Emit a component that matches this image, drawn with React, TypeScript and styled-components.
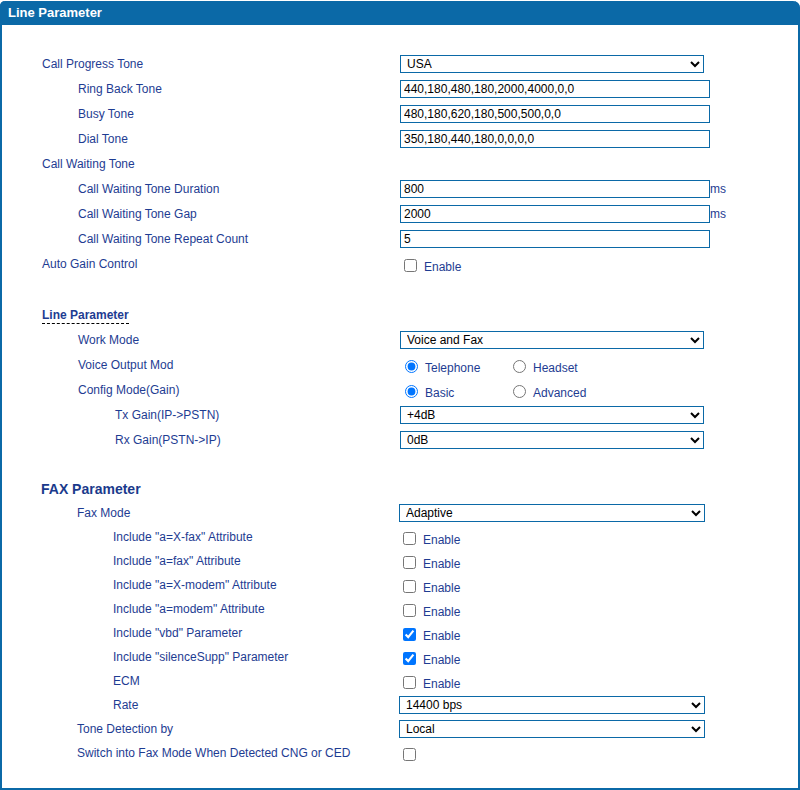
import React from 'react';
import styled, { createGlobalStyle } from 'styled-components';

const GlobalStyle = createGlobalStyle`
  html, body {
    margin: 0;
    padding: 0;
    background: #ffffff;
    font-family: "Liberation Sans", Arial, sans-serif;
  }
`;

const blue = '#0b69a7';
const navy = '#1e3c92';

const Panel = styled.div`
  margin-top: 1px;
  width: 800px;
  box-sizing: border-box;
  border: 2px solid ${blue};
  border-top: none;
  border-radius: 5px 7px 0 0;
  background: #fff;
`;

const Header = styled.div`
  height: 24px;
  margin: 0 -2px;
  padding-left: 8px;
  background: ${blue};
  border-radius: 5px 7px 0 0;
  color: #fff;
  font-size: 13px;
  font-weight: bold;
  line-height: 23px;
`;

const Body = styled.div`
  padding: 26px 0 23px;
`;

const Section = styled.div<{ $col: number; $rowH: number }>`
  --col: ${p => p.$col}px;
  --row: ${p => p.$rowH}px;
`;

const Row = styled.div`
  display: grid;
  grid-template-columns: var(--col) 1fr;
  align-items: center;
  height: var(--row);
`;

const Spacer = styled.div<{ $h: number }>`
  height: ${p => p.$h}px;
`;

const Label = styled.div<{ $indent: number }>`
  padding-left: ${p => p.$indent}px;
  font-size: 12px;
  color: ${navy};
  white-space: nowrap;
`;

const SubTitle = styled.span`
  font-size: 12px;
  font-weight: bold;
  color: ${navy};
  border-bottom: 1px dashed #000;
  padding-bottom: 1px;
`;

const FaxTitle = styled.div<{ $indent: number }>`
  padding-left: ${p => p.$indent}px;
  font-size: 14px;
  font-weight: bold;
  color: #1a3a8c;
`;

const Control = styled.div`
  display: flex;
  align-items: center;
`;

const TextInput = styled.input`
  width: 310px;
  height: 18px;
  box-sizing: border-box;
  border: 1px solid ${blue};
  padding: 0 3px;
  font-family: "Liberation Sans", Arial, sans-serif;
  font-size: 12px;
  color: #000;
  outline: none;
`;

const Select = styled.select<{ $w: number }>`
  width: ${p => p.$w}px;
  height: 18px;
  box-sizing: border-box;
  border: 1px solid ${blue};
  border-radius: 0;
  padding: 0 0 0 2px;
  font-family: "Liberation Sans", Arial, sans-serif;
  font-size: 12px;
  color: #000;
  background: #fff;
`;

const Unit = styled.span`
  font-size: 12px;
  color: ${navy};
`;

const Check = styled.input`
  width: 13px;
  height: 13px;
  margin: 3px 3px 0 4px;
`;

const OptionText = styled.span`
  margin-left: 4px;
  margin-top: 6px;
  font-size: 12px;
  color: ${navy};
`;

const RadioOption = styled.label`
  display: flex;
  align-items: center;
  width: 108px;
`;

const Radio = styled.input`
  width: 13px;
  height: 13px;
  margin: 4px 3px 0 5px;
`;

type Item =
  | { kind: 'select'; value: string; w?: number }
  | { kind: 'text'; value: string; unit?: string }
  | { kind: 'check'; checked?: boolean; noText?: boolean }
  | { kind: 'radio'; name: string; options: string[] };

function Field({ item }: { item: Item }) {
  switch (item.kind) {
    case 'select':
      return (
        <Select $w={item.w ?? 304} defaultValue={item.value}>
          <option>{item.value}</option>
        </Select>
      );
    case 'text':
      return (
        <>
          <TextInput defaultValue={item.value} />
          {item.unit && <Unit>{item.unit}</Unit>}
        </>
      );
    case 'check':
      return (
        <>
          <Check type="checkbox" defaultChecked={item.checked} />
          {!item.noText && <OptionText>Enable</OptionText>}
        </>
      );
    case 'radio':
      return (
        <>
          {item.options.map((o, i) => (
            <RadioOption key={o}>
              <Radio type="radio" name={item.name} defaultChecked={i === 0} />
              <OptionText>{o}</OptionText>
            </RadioOption>
          ))}
        </>
      );
  }
}

type RowDef = { label: string; level: number; item?: Item };

const toneRows: RowDef[] = [
  { label: 'Call Progress Tone', level: 0, item: { kind: 'select', value: 'USA' } },
  { label: 'Ring Back Tone', level: 1, item: { kind: 'text', value: '440,180,480,180,2000,4000,0,0' } },
  { label: 'Busy Tone', level: 1, item: { kind: 'text', value: '480,180,620,180,500,500,0,0' } },
  { label: 'Dial Tone', level: 1, item: { kind: 'text', value: '350,180,440,180,0,0,0,0' } },
  { label: 'Call Waiting Tone', level: 0 },
  { label: 'Call Waiting Tone Duration', level: 1, item: { kind: 'text', value: '800', unit: 'ms' } },
  { label: 'Call Waiting Tone Gap', level: 1, item: { kind: 'text', value: '2000', unit: 'ms' } },
  { label: 'Call Waiting Tone Repeat Count', level: 1, item: { kind: 'text', value: '5' } },
  { label: 'Auto Gain Control', level: 0, item: { kind: 'check' } },
];

const lineRows: RowDef[] = [
  { label: 'Work Mode', level: 1, item: { kind: 'select', value: 'Voice and Fax' } },
  { label: 'Voice Output Mod', level: 1, item: { kind: 'radio', name: 'vom', options: ['Telephone', 'Headset'] } },
  { label: 'Config Mode(Gain)', level: 1, item: { kind: 'radio', name: 'cfg', options: ['Basic', 'Advanced'] } },
  { label: 'Tx Gain(IP->PSTN)', level: 2, item: { kind: 'select', value: '+4dB' } },
  { label: 'Rx Gain(PSTN->IP)', level: 2, item: { kind: 'select', value: '0dB' } },
];

const faxRows: RowDef[] = [
  { label: 'Fax Mode', level: 1, item: { kind: 'select', value: 'Adaptive', w: 306 } },
  { label: 'Include "a=X-fax" Attribute', level: 2, item: { kind: 'check' } },
  { label: 'Include "a=fax" Attribute', level: 2, item: { kind: 'check' } },
  { label: 'Include "a=X-modem" Attribute', level: 2, item: { kind: 'check' } },
  { label: 'Include "a=modem" Attribute', level: 2, item: { kind: 'check' } },
  { label: 'Include "vbd" Parameter', level: 2, item: { kind: 'check', checked: true } },
  { label: 'Include "silenceSupp" Parameter', level: 2, item: { kind: 'check', checked: true } },
  { label: 'ECM', level: 2, item: { kind: 'check' } },
  { label: 'Rate', level: 2, item: { kind: 'select', value: '14400 bps', w: 306 } },
  { label: 'Tone Detection by', level: 1, item: { kind: 'select', value: 'Local', w: 306 } },
  { label: 'Switch into Fax Mode When Detected CNG or CED', level: 1, item: { kind: 'check', noText: true } },
];

const mainIndent = [40, 76, 113];
const faxIndent = [39, 75, 111];

function Rows({ rows, indent }: { rows: RowDef[]; indent: number[] }) {
  return (
    <>
      {rows.map(r => (
        <Row key={r.label}>
          <Label $indent={indent[r.level]}>{r.label}</Label>
          <Control>{r.item && <Field item={r.item} />}</Control>
        </Row>
      ))}
    </>
  );
}

export default function App() {
  return (
    <>
      <GlobalStyle />
      <Panel>
        <Header>Line Parameter</Header>
        <Body>
          <Section $col={398} $rowH={25}>
            <Rows rows={toneRows} indent={mainIndent} />
            <Spacer $h={26} />
            <Row>
              <Label $indent={40}>
                <SubTitle>Line Parameter</SubTitle>
              </Label>
            </Row>
            <Rows rows={lineRows} indent={mainIndent} />
            <Spacer $h={25} />
          </Section>
          <Section $col={397} $rowH={24}>
            <Row>
              <FaxTitle $indent={39}>FAX Parameter</FaxTitle>
            </Row>
            <Rows rows={faxRows} indent={faxIndent} />
          </Section>
        </Body>
      </Panel>
    </>
  );
}
